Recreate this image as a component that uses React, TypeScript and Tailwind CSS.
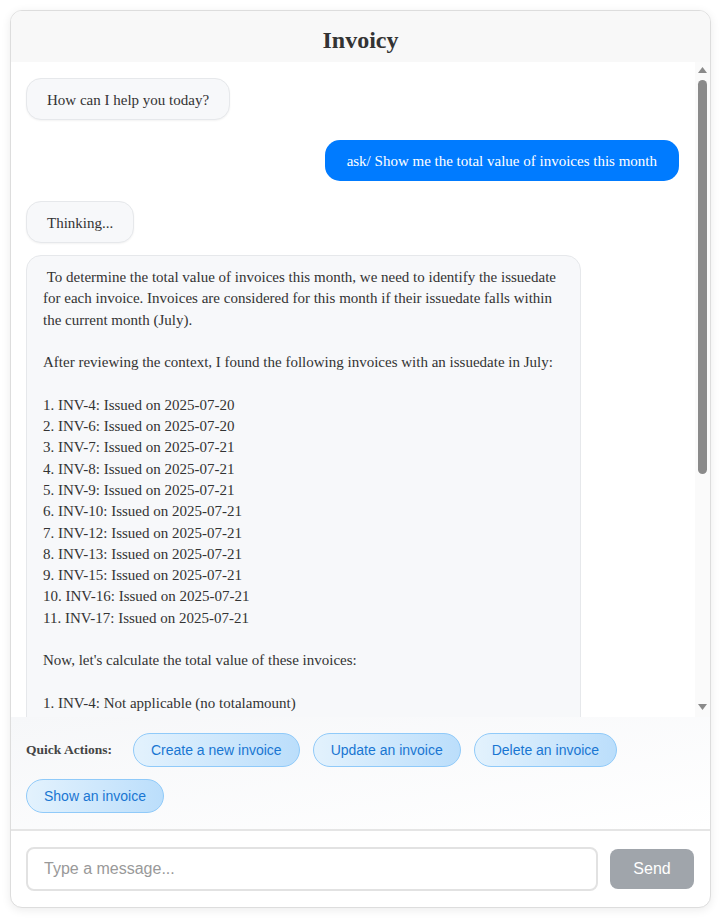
import { useState } from "react";

type Message = {
  from: "bot" | "user";
  text: string;
};

const answer = ` To determine the total value of invoices this month, we need to identify the issuedate for each invoice. Invoices are considered for this month if their issuedate falls within the current month (July).

After reviewing the context, I found the following invoices with an issuedate in July:

1. INV-4: Issued on 2025-07-20
2. INV-6: Issued on 2025-07-20
3. INV-7: Issued on 2025-07-21
4. INV-8: Issued on 2025-07-21
5. INV-9: Issued on 2025-07-21
6. INV-10: Issued on 2025-07-21
7. INV-12: Issued on 2025-07-21
8. INV-13: Issued on 2025-07-21
9. INV-15: Issued on 2025-07-21
10. INV-16: Issued on 2025-07-21
11. INV-17: Issued on 2025-07-21

Now, let's calculate the total value of these invoices:

1. INV-4: Not applicable (no totalamount)
2. INV-6: Not applicable (no totalamount)
3. INV-7: 1500
4. INV-8: 2300
5. INV-9: 750
6. INV-10: 1200
7. INV-12: 980
8. INV-13: 3400
9. INV-15: 560
10. INV-16: 2100
11. INV-17: 1800

The total value is: 1500 + 2300 + 750 + 1200 + 980 + 3400 + 560 + 2100 + 1800 = 14590

So, the total value of invoices this month is 14590.`;

const messages: Message[] = [
  { from: "bot", text: "How can I help you today?" },
  { from: "user", text: "ask/ Show me the total value of invoices this month" },
  { from: "bot", text: "Thinking..." },
];

const quickActions = [
  "Create a new invoice",
  "Update an invoice",
  "Delete an invoice",
  "Show an invoice",
];

// the page's own scrollbar is hidden in the shot, so draw one that looks the same
function ScrollTrack() {
  return (
    <div className="w-[15px] shrink-0 bg-[#fafafa] flex flex-col items-center pt-[5px] pb-[7px]">
      <svg width="9" height="6" viewBox="0 0 9 6">
        <path d="M4.5 0 L9 6 L0 6 Z" fill="#8a8a8a" />
      </svg>
      <div className="w-[9px] h-[394px] mt-[7px] rounded-full bg-[#8a8a8a]" />
      <div className="flex-1" />
      <svg width="9" height="6" viewBox="0 0 9 6">
        <path d="M0 0 L9 0 L4.5 6 Z" fill="#8a8a8a" />
      </svg>
    </div>
  );
}

export default function App() {
  const [input, setInput] = useState("");

  return (
    <div className="bg-white h-[918px] p-[10px] font-['Liberation_Serif',serif] text-[#333]">
      <div className="w-[701px] h-[898px] flex flex-col border border-[#ddd] rounded-xl overflow-hidden shadow-[0_2px_10px_rgba(0,0,0,0.08)] bg-white">
        <div className="h-[51px] shrink-0 bg-[#f8f8f8] flex items-center justify-center">
          <h1 className="text-[24px] font-bold text-[#333] leading-none pt-[7px]">Invoicy</h1>
        </div>

        <div className="flex-1 min-h-0 flex">
          <div className="flex-1 min-w-0 overflow-y-scroll [scrollbar-width:none] pl-[15px] pr-4 pt-4 pb-4">
            {messages.map((m, i) => (
              <div
                key={i}
                className={`flex ${m.from === "user" ? "justify-end" : "justify-start"} mb-5`}
              >
                {m.from === "user" ? (
                  <div className="bg-[#007bff] text-white text-[15px] leading-[21px] px-[22px] pt-[11px] pb-[9px] rounded-[15px]">
                    {m.text}
                  </div>
                ) : (
                  <div className="bg-[#f7f8fa] border border-[#e6e8eb] shadow-[0_1px_2px_rgba(0,0,0,0.05)] text-[15px] leading-[20px] px-5 pt-[11px] pb-[9px] rounded-[15px]">
                    {m.text}
                  </div>
                )}
              </div>
            ))}
            <div className="flex justify-start -mt-2">
              <div className="w-[555px] bg-[#f7f8fa] border border-[#e6e8eb] text-[15px] leading-[21.3px] px-4 pt-[11px] pb-3 rounded-[15px] whitespace-pre-wrap">
                {answer}
              </div>
            </div>
          </div>
          <ScrollTrack />
        </div>

        <div className="shrink-0 bg-gradient-to-br from-[#f6f7f9] to-white px-[15px] pt-4 pb-4 flex flex-wrap items-center gap-x-[13px] gap-y-3">
          <span className="text-[13.5px] font-bold text-[#444] mr-[8px]">Quick Actions:</span>
          {quickActions.map((a) => (
            <button
              key={a}
              className="h-[34px] px-[17px] rounded-full border border-[#90caf9] bg-gradient-to-r from-[#e3f2fd] to-[#bbdefb] text-[#1976d2] text-[14px] font-['Liberation_Sans',Arial,sans-serif]"
            >
              {a}
            </button>
          ))}
        </div>

        <div className="shrink-0 border-t-2 border-[#e5e5e5] px-[15px] pt-4 pb-4 flex items-center gap-3">
          <input
            value={input}
            onChange={(e) => setInput(e.target.value)}
            placeholder="Type a message..."
            className="flex-1 h-[44px] border-2 border-[#e2e2e2] rounded-lg px-4 text-[16px] font-['Liberation_Sans',Arial,sans-serif] placeholder:text-[#999] outline-none"
          />
          <button
            disabled
            className="w-[84px] h-[40px] mr-px rounded-lg bg-[#a0a5ab] text-white text-[16px] font-['Liberation_Sans',Arial,sans-serif]"
          >
            Send
          </button>
        </div>
      </div>
    </div>
  );
}
